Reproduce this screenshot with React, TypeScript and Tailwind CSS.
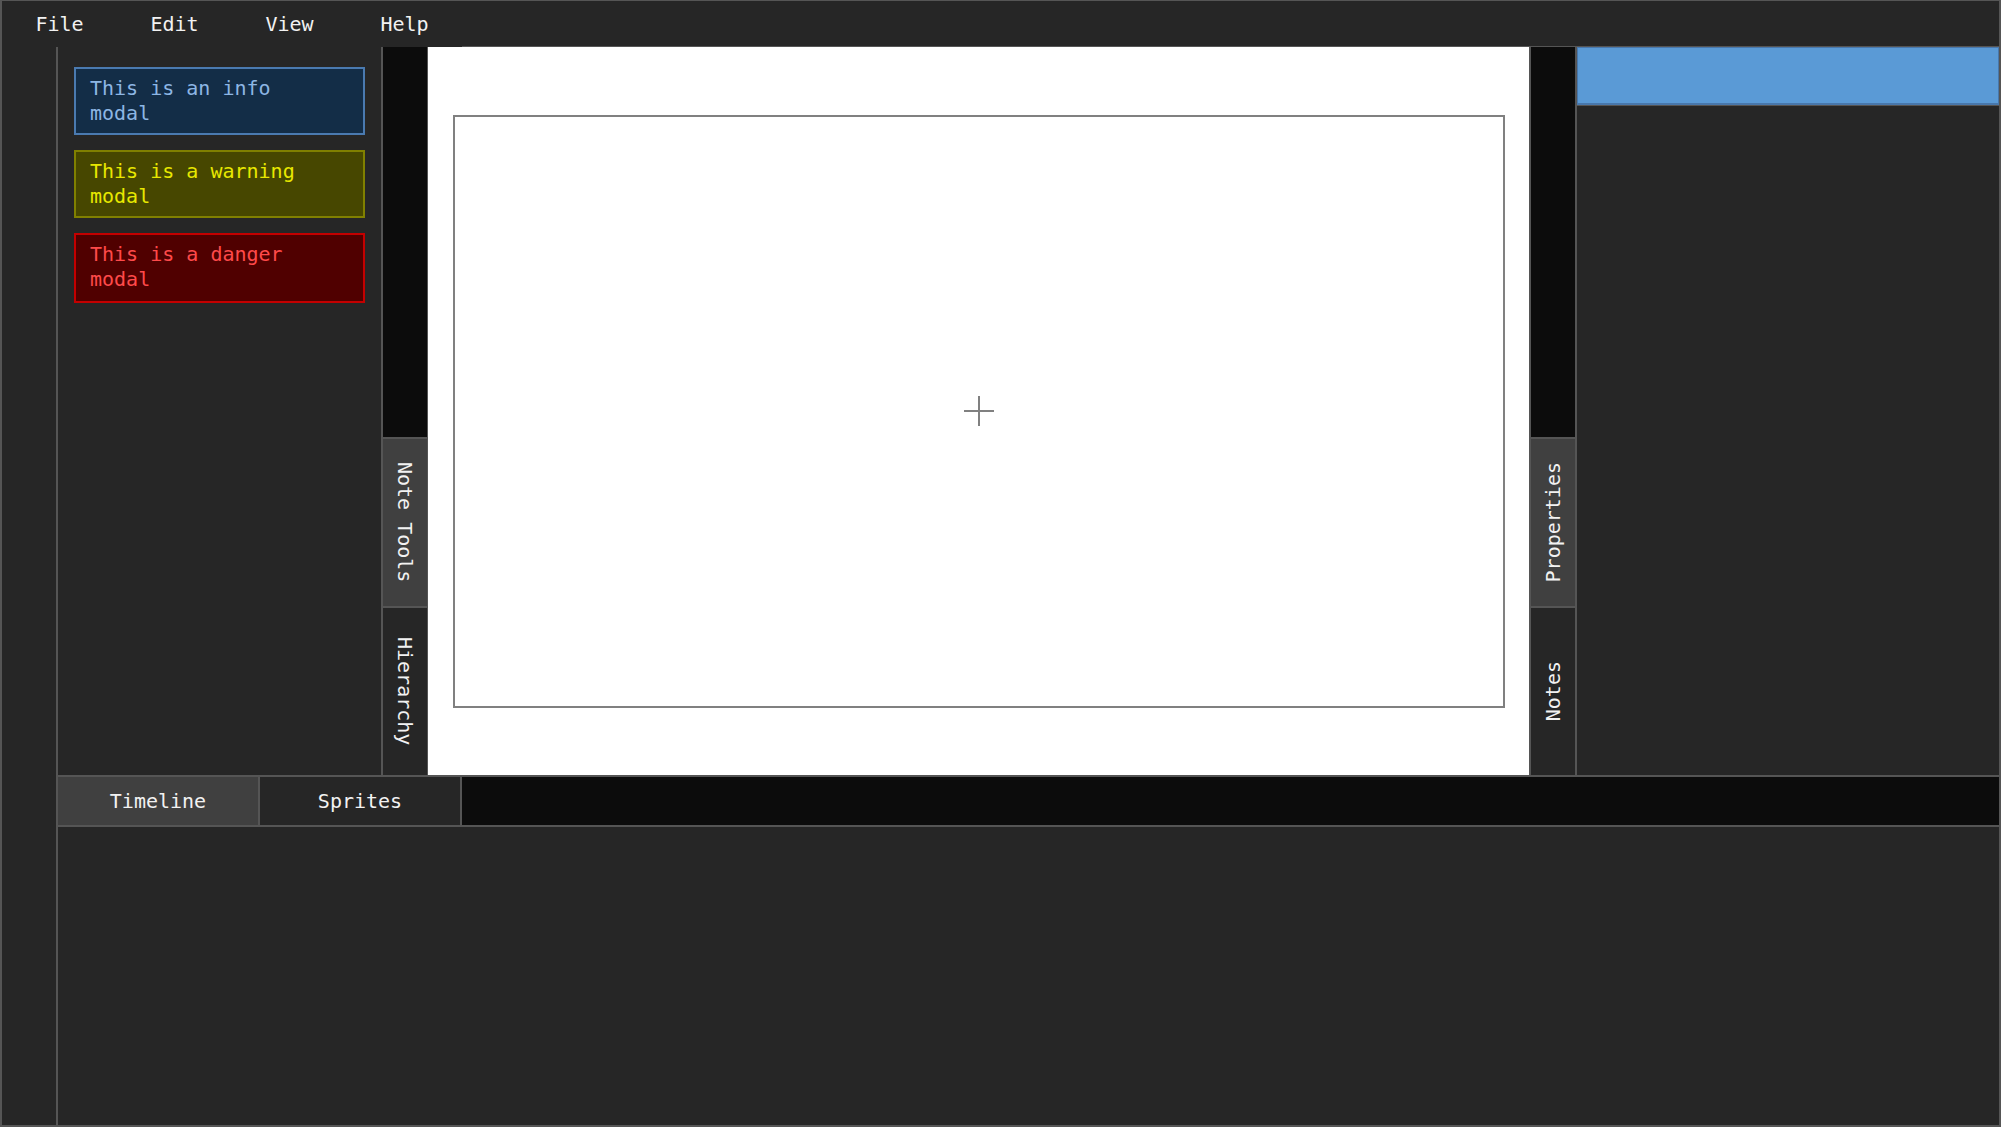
import React from "react";

const mono = { fontFamily: '"DejaVu Sans Mono", "Liberation Mono", monospace' };

const menuItems = ["File", "Edit", "View", "Help"];

const modals = [
  { text: "This is an info modal", box: "bg-[#132d47] border-[#4a7ab0] text-[#8db6e4]" },
  { text: "This is a warning modal", box: "bg-[#474700] border-[#808000] text-[#e8e800]" },
  { text: "This is a danger modal", box: "bg-[#500000] border-[#c40000] text-[#ff4a4a] pb-[9px]" },
];

function SideTab({ label, active, flip }: { label: string; active?: boolean; flip?: boolean }) {
  return (
    <div
      className={`h-[169px] flex items-center justify-center border-t-2 border-[#555] ${
        active ? "bg-[#404040]" : "bg-[#262626]"
      }`}
    >
      <span
        className={`[writing-mode:vertical-rl] text-[20px] leading-none text-[#f2f2f2] ${flip ? "rotate-180" : ""}`}
      >
        {label}
      </span>
    </div>
  );
}

export default function App() {
  return (
    <div className="w-[2003px] h-[1128px] bg-white" style={mono}>
      <div className="w-[2001px] h-[1127px] flex flex-col bg-[#262626] border-t border-l-2 border-r-2 border-b-2 border-[#555]">
        {/* menu bar */}
        <div className="h-[46px] flex">
          <div className="flex">
            {menuItems.map((m) => (
              <div key={m} className="w-[115px] flex items-center justify-center text-[20px] text-[#f2f2f2]">
                {m}
              </div>
            ))}
          </div>
          <div className="flex-1 border-b-2 border-[#555] mb-[-1px]" />
        </div>

        <div className="flex-1 flex min-h-0">
          {/* left rail */}
          <div className="w-[56px] shrink-0 border-r-2 border-[#555]" />

          <div className="flex-1 flex flex-col min-w-0">
            {/* workspace */}
            <div className="h-[730px] flex border-b-2 border-[#555]">
              <div className="w-[325px] shrink-0 border-r-2 border-[#555] flex flex-col gap-[15px] pt-[20px] pl-4 pr-4">
                {modals.map((m) => (
                  <div
                    key={m.text}
                    className={`border-2 pl-[14px] pr-[40px] py-[7px] text-[20px] leading-[25px] ${m.box}`}
                  >
                    {m.text}
                  </div>
                ))}
              </div>

              <div className="w-[45px] shrink-0 flex flex-col bg-[#0c0c0c] border-r border-[#555]">
                <div className="flex-1" />
                <SideTab label="Note Tools" active />
                <SideTab label="Hierarchy" />
              </div>

              <div className="w-[1101px] shrink-0 bg-white flex items-center justify-center">
                <div className="w-[1052px] h-[593px] border-2 border-[#808080] flex items-center justify-center">
                  <svg width="30" height="30" viewBox="0 0 30 30">
                    <path d="M15 0V30M0 15H30" stroke="#808080" strokeWidth="2" />
                  </svg>
                </div>
              </div>

              <div className="w-[48px] shrink-0 flex flex-col bg-[#0c0c0c] border-l-2 border-r-2 border-[#555]">
                <div className="flex-1" />
                <SideTab label="Properties" active flip />
                <SideTab label="Notes" flip />
              </div>

              <div className="flex-1 flex flex-col">
                <div className="h-[58px] bg-[#5a9ad6] border border-[#4877ab] border-b-2" />
                <div className="flex-1 border-t border-[#555]" />
              </div>
            </div>

            {/* bottom tabs */}
            <div className="h-[50px] flex border-b-2 border-[#555]">
              <div className="w-[202px] bg-[#404040] flex items-center justify-center text-[20px] text-[#f2f2f2] border-r-2 border-[#555]">
                Timeline
              </div>
              <div className="w-[202px] bg-[#262626] flex items-center justify-center text-[20px] text-[#f2f2f2] border-r-2 border-[#555]">
                Sprites
              </div>
              <div className="flex-1 bg-[#0c0c0c]" />
            </div>

            <div className="flex-1" />
          </div>
        </div>
      </div>
    </div>
  );
}
